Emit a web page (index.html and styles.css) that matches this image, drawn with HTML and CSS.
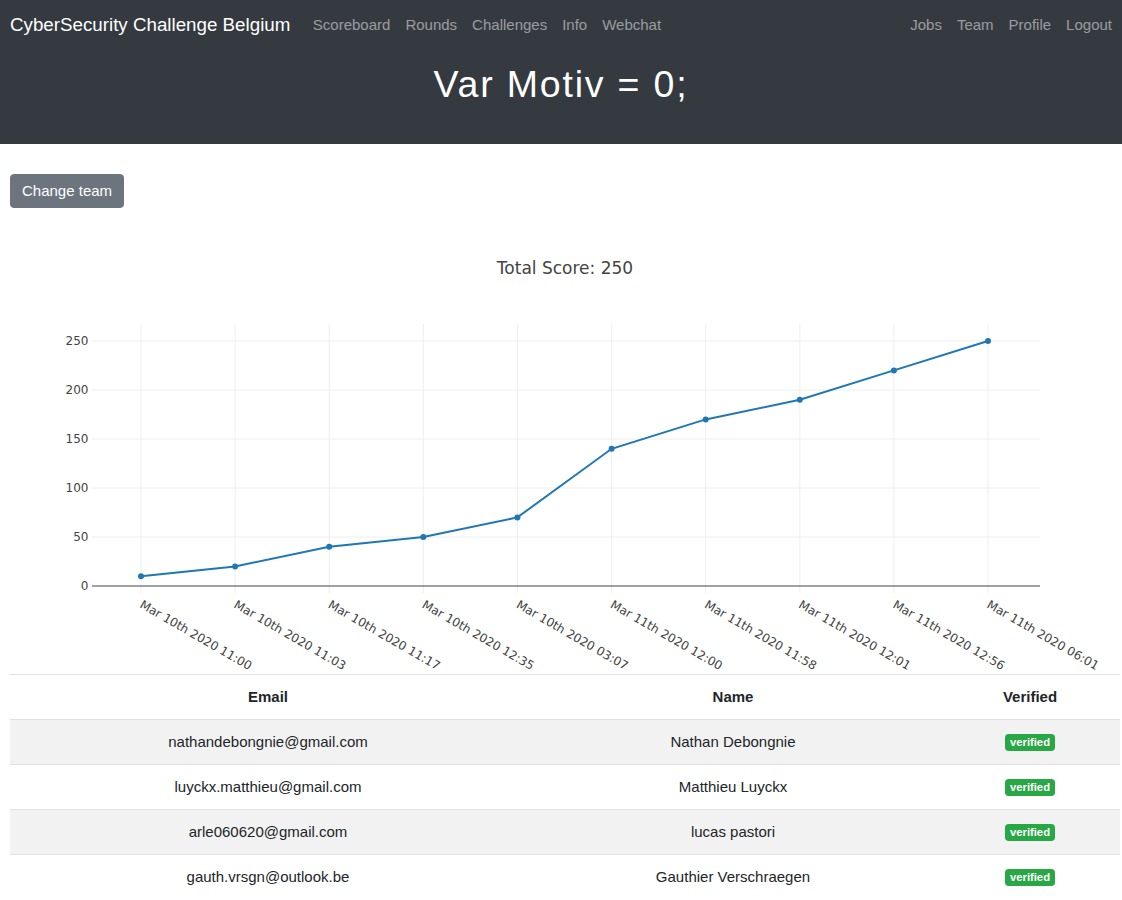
FILE: index.html
```html
<!DOCTYPE html>
<html lang="en">
<head>
<meta charset="utf-8">
<title>Var Motiv = 0;</title>
<link rel="stylesheet" href="styles.css">
</head>
<body>
<header class="hero">
  <nav class="navbar">
    <a class="brand" href="#">CyberSecurity Challenge Belgium</a>
    <ul class="nav nav-left">
      <li><a href="#">Scoreboard</a></li>
      <li><a href="#">Rounds</a></li>
      <li><a href="#">Challenges</a></li>
      <li><a href="#">Info</a></li>
      <li><a href="#">Webchat</a></li>
    </ul>
    <ul class="nav nav-right">
      <li><a href="#">Jobs</a></li>
      <li><a href="#">Team</a></li>
      <li><a href="#">Profile</a></li>
      <li><a href="#">Logout</a></li>
    </ul>
  </nav>
  <h1 class="title">Var Motiv = 0;</h1>
</header>
<main class="content">
  <button class="btn" type="button">Change team</button>
  <div class="chart">
    <svg width="1110" height="444" viewBox="10 230 1110 444" xmlns="http://www.w3.org/2000/svg">
      <text x="565" y="274" class="ctitle" text-anchor="middle">Total Score: 250</text>
      <g class="grid">
        <line x1="141" y1="324" x2="141" y2="593"/>
        <line x1="235.1" y1="324" x2="235.1" y2="593"/>
        <line x1="329.2" y1="324" x2="329.2" y2="593"/>
        <line x1="423.3" y1="324" x2="423.3" y2="593"/>
        <line x1="517.4" y1="324" x2="517.4" y2="593"/>
        <line x1="611.6" y1="324" x2="611.6" y2="593"/>
        <line x1="705.7" y1="324" x2="705.7" y2="593"/>
        <line x1="799.8" y1="324" x2="799.8" y2="593"/>
        <line x1="893.9" y1="324" x2="893.9" y2="593"/>
        <line x1="988" y1="324" x2="988" y2="593"/>
        <line x1="92" y1="341" x2="1040" y2="341"/>
        <line x1="92" y1="390" x2="1040" y2="390"/>
        <line x1="92" y1="439" x2="1040" y2="439"/>
        <line x1="92" y1="488" x2="1040" y2="488"/>
        <line x1="92" y1="537" x2="1040" y2="537"/>
      </g>
      <line class="zero" x1="92" y1="586" x2="1040" y2="586"/>
      <g class="ytick" text-anchor="end">
        <text x="88.5" y="345.3">250</text>
        <text x="88.5" y="394.3">200</text>
        <text x="88.5" y="443.3">150</text>
        <text x="88.5" y="492.3">100</text>
        <text x="88.5" y="541.3">50</text>
        <text x="88.5" y="590.3">0</text>
      </g>
      <g class="xtick">
        <text x="139" y="607" transform="rotate(30 139 607)">Mar 10th 2020 11:00</text>
        <text x="233.1" y="607" transform="rotate(30 233.1 607)">Mar 10th 2020 11:03</text>
        <text x="327.2" y="607" transform="rotate(30 327.2 607)">Mar 10th 2020 11:17</text>
        <text x="421.3" y="607" transform="rotate(30 421.3 607)">Mar 10th 2020 12:35</text>
        <text x="515.4" y="607" transform="rotate(30 515.4 607)">Mar 10th 2020 03:07</text>
        <text x="609.6" y="607" transform="rotate(30 609.6 607)">Mar 11th 2020 12:00</text>
        <text x="703.7" y="607" transform="rotate(30 703.7 607)">Mar 11th 2020 11:58</text>
        <text x="797.8" y="607" transform="rotate(30 797.8 607)">Mar 11th 2020 12:01</text>
        <text x="891.9" y="607" transform="rotate(30 891.9 607)">Mar 11th 2020 12:56</text>
        <text x="986" y="607" transform="rotate(30 986 607)">Mar 11th 2020 06:01</text>
      </g>
      <polyline class="line" points="141,576.2 235.1,566.4 329.2,546.8 423.3,537 517.4,517.4 611.6,448.8 705.7,419.4 799.8,399.8 893.9,370.4 988,341"/>
      <g class="pts">
        <circle cx="141" cy="576.2" r="3"/>
        <circle cx="235.1" cy="566.4" r="3"/>
        <circle cx="329.2" cy="546.8" r="3"/>
        <circle cx="423.3" cy="537" r="3"/>
        <circle cx="517.4" cy="517.4" r="3"/>
        <circle cx="611.6" cy="448.8" r="3"/>
        <circle cx="705.7" cy="419.4" r="3"/>
        <circle cx="799.8" cy="399.8" r="3"/>
        <circle cx="893.9" cy="370.4" r="3"/>
        <circle cx="988" cy="341" r="3"/>
      </g>
    </svg>
  </div>
  <table class="members">
    <colgroup>
      <col class="c-email">
      <col class="c-name">
      <col class="c-ver">
    </colgroup>
    <thead>
      <tr><th>Email</th><th>Name</th><th>Verified</th></tr>
    </thead>
    <tbody>
      <tr><td>nathandebongnie@gmail.com</td><td>Nathan Debongnie</td><td><span class="badge">verified</span></td></tr>
      <tr><td>luyckx.matthieu@gmail.com</td><td>Matthieu Luyckx</td><td><span class="badge">verified</span></td></tr>
      <tr><td>arle060620@gmail.com</td><td>lucas pastori</td><td><span class="badge">verified</span></td></tr>
      <tr><td>gauth.vrsgn@outlook.be</td><td>Gauthier Verschraegen</td><td><span class="badge">verified</span></td></tr>
    </tbody>
  </table>
</main>
</body>
</html>
```

FILE: styles.css
```css
* { box-sizing: border-box; }
html, body { margin: 0; padding: 0; }
body {
  font-family: "Liberation Sans", Arial, sans-serif;
  font-size: 15px;
  line-height: 1.5;
  color: #212529;
  background: #fff;
}
.hero {
  background: #343a40;
  height: 144px;
}
.navbar {
  display: flex;
  align-items: center;
  height: 48px;
  padding: 2px 2.5px 0 10px;
}
.brand {
  font-size: 18.75px;
  line-height: 28px;
  color: #fff;
  text-decoration: none;
  margin-right: 15px;
}
.nav {
  display: flex;
  list-style: none;
  margin: 0;
  padding: 0;
}
.nav-right { margin-left: auto; }
.nav a {
  display: block;
  padding: 0 7.5px;
  color: rgba(255, 255, 255, 0.5);
  text-decoration: none;
  font-size: 15px;
  line-height: 22px;
}
.title {
  margin: 12px 0 0;
  text-align: center;
  color: #fff;
  font-weight: 400;
  font-size: 37.5px;
  line-height: 48px;
  letter-spacing: 1.8px;
}
.content {
  padding: 30px 0 0 10px;
  width: 1120px;
}
.btn {
  display: block;
  font-family: inherit;
  font-size: 15px;
  line-height: 22px;
  padding: 5px 11px;
  color: #fff;
  background: #6c757d;
  border: 1px solid #6c757d;
  border-radius: 3.75px;
}
.chart {
  margin-top: 22px;
  height: 444px;
}
.chart svg { display: block; }
.ctitle {
  font-family: "DejaVu Sans", Verdana, sans-serif;
  font-size: 17px;
  fill: #444;
}
.grid line { stroke: #eee; stroke-width: 1; }
.zero { stroke: #444; stroke-width: 1; }
.ytick text, .xtick text {
  font-family: "DejaVu Sans", Verdana, sans-serif;
  font-size: 12px;
  fill: #444;
}
.line { fill: none; stroke: #1f77b4; stroke-width: 2; }
.pts circle { fill: #1f77b4; }
.members {
  width: 1110px;
  border-collapse: collapse;
  table-layout: fixed;
}
.c-email { width: 516px; }
.c-name { width: 414px; }
.c-ver { width: 180px; }
.members th, .members td {
  text-align: center;
  padding: 11px;
  line-height: 22px;
  border-top: 1px solid #dee2e6;
  vertical-align: middle;
}
.members th { font-weight: 700; }
.members tbody tr:nth-child(odd) { background: #f2f2f2; }
.badge {
  display: inline-block;
  background: #28a745;
  color: #fff;
  font-weight: 700;
  font-size: 11.25px;
  line-height: 1;
  padding: 3px 4.5px;
  border-radius: 3.75px;
  vertical-align: 1px;
}
```
